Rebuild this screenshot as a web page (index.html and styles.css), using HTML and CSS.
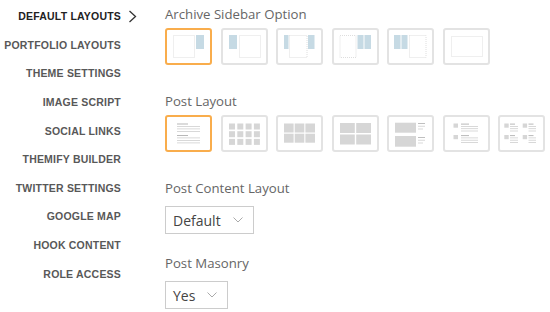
FILE: index.html
```html
<!DOCTYPE html>
<html lang="en">
<head>
  <meta charset="UTF-8" />
  <title>Theme Settings</title>
  <link rel="stylesheet" href="styles.css">
</head>
<body>

<div class="page">
  <ul class="menu">
    <li class="menu-item active">
      <span>DEFAULT LAYOUTS</span>
      <svg class="chevron" width="9" height="13" viewBox="0 0 9 13"><polyline points="1.5,1 7.5,6.5 1.5,12" /></svg>
    </li>
    <li class="menu-item"><span>PORTFOLIO LAYOUTS</span></li>
    <li class="menu-item"><span>THEME SETTINGS</span></li>
    <li class="menu-item"><span>IMAGE SCRIPT</span></li>
    <li class="menu-item"><span>SOCIAL LINKS</span></li>
    <li class="menu-item"><span>THEMIFY BUILDER</span></li>
    <li class="menu-item"><span>TWITTER SETTINGS</span></li>
    <li class="menu-item"><span>GOOGLE MAP</span></li>
    <li class="menu-item"><span>HOOK CONTENT</span></li>
    <li class="menu-item"><span>ROLE ACCESS</span></li>
  </ul>

  <div class="settings">
    <div class="section">
      <div class="label">Archive Sidebar Option</div>
      <div class="options">
        <div class="option selected">
          <svg viewBox="2 2 43 33"><rect class="dots" x="8.5" y="7.5" width="21" height="22" /><rect class="side" x="31" y="7" width="8" height="14" /></svg>
        </div>
        <div class="option">
          <svg viewBox="2 2 43 33"><rect class="side" x="8" y="7" width="8" height="14" /><rect class="dots" x="18.5" y="7.5" width="21" height="22" /></svg>
        </div>
        <div class="option">
          <svg viewBox="2 2 43 33"><rect class="side" x="8" y="7" width="4.5" height="14" /><rect class="dots" x="13.5" y="7.5" width="17.5" height="22" /><rect class="side" x="32" y="7" width="6.5" height="14" /></svg>
        </div>
        <div class="option">
          <svg viewBox="2 2 43 33"><rect class="dots" x="8" y="7.5" width="16" height="22" /><rect class="side" x="25.5" y="7" width="6" height="14" /><rect class="side" x="32.5" y="7" width="6.5" height="14" /></svg>
        </div>
        <div class="option">
          <svg viewBox="2 2 43 33"><rect class="side" x="7" y="7" width="6.5" height="14" /><rect class="side" x="14.5" y="7" width="6" height="14" /><rect class="dots" x="22.5" y="7.5" width="16.5" height="22" /></svg>
        </div>
        <div class="option">
          <svg viewBox="2 2 43 33"><rect class="dots" x="8.5" y="8.5" width="31" height="20" /></svg>
        </div>
      </div>
    </div>

    <div class="section">
      <div class="label">Post Layout</div>
      <div class="options">
        <div class="option selected">
          <svg viewBox="2 2 43 33">
            <rect class="title" x="12" y="8.5" width="11" height="1" />
            <rect class="line" x="12" y="11" width="23" height="0.8" />
            <rect class="line" x="12" y="13.5" width="23" height="0.8" />
            <rect class="line" x="12" y="16" width="23" height="0.8" />
            <rect class="title" x="12" y="20" width="11" height="1" />
            <rect class="line" x="12" y="22.5" width="23" height="0.8" />
            <rect class="line" x="12" y="25" width="23" height="0.8" />
            <rect class="line" x="12" y="27.5" width="23" height="0.8" />
          </svg>
        </div>
        <div class="option">
          <svg viewBox="2 2 43 33">
            <rect class="block" x="8" y="8.5" width="6" height="6" /><rect class="block" x="16.3" y="8.5" width="6" height="6" /><rect class="block" x="24.6" y="8.5" width="6" height="6" /><rect class="block" x="32.9" y="8.5" width="6" height="6" />
            <rect class="block" x="8" y="16.2" width="6" height="6" /><rect class="block" x="16.3" y="16.2" width="6" height="6" /><rect class="block" x="24.6" y="16.2" width="6" height="6" /><rect class="block" x="32.9" y="16.2" width="6" height="6" />
            <rect class="block" x="8" y="23.9" width="6" height="6" /><rect class="block" x="16.3" y="23.9" width="6" height="6" /><rect class="block" x="24.6" y="23.9" width="6" height="6" /><rect class="block" x="32.9" y="23.9" width="6" height="6" />
          </svg>
        </div>
        <div class="option">
          <svg viewBox="2 2 43 33">
            <rect class="block" x="8" y="8.5" width="9.6" height="9" /><rect class="block" x="18.7" y="8.5" width="9.6" height="9" /><rect class="block" x="29.4" y="8.5" width="9.6" height="9" />
            <rect class="block" x="8" y="18.7" width="9.6" height="9" /><rect class="block" x="18.7" y="18.7" width="9.6" height="9" /><rect class="block" x="29.4" y="18.7" width="9.6" height="9" />
          </svg>
        </div>
        <div class="option">
          <svg viewBox="2 2 43 33">
            <rect class="block" x="8" y="8" width="14.8" height="10" /><rect class="block" x="24.2" y="8" width="14.8" height="10" />
            <rect class="block" x="8" y="19.5" width="14.8" height="10" /><rect class="block" x="24.2" y="19.5" width="14.8" height="10" />
          </svg>
        </div>
        <div class="option">
          <svg viewBox="2 2 43 33">
            <rect class="block" x="8" y="7.7" width="21" height="10" /><rect class="block" x="8" y="21" width="21" height="10.7" />
            <rect class="title" x="31" y="8" width="7" height="0.9" /><rect class="line" x="31" y="10.8" width="7" height="0.8" /><rect class="line" x="31" y="13.6" width="5" height="0.8" />
            <rect class="title" x="31" y="22" width="7" height="0.9" /><rect class="line" x="31" y="24.8" width="7" height="0.8" /><rect class="line" x="31" y="27.6" width="5" height="0.8" />
          </svg>
        </div>
        <div class="option">
          <svg viewBox="2 2 43 33">
            <rect class="block" x="10.5" y="8.5" width="4.5" height="4.2" />
            <rect class="title" x="18" y="8.6" width="8" height="1" /><rect class="line" x="18" y="11" width="17" height="0.8" /><rect class="line" x="18" y="13.3" width="17" height="0.8" /><rect class="line" x="18" y="15.6" width="17" height="0.8" />
            <rect class="block" x="10.5" y="20" width="4.5" height="4.2" />
            <rect class="title" x="18" y="20.1" width="8" height="1" /><rect class="line" x="18" y="22.5" width="17" height="0.8" /><rect class="line" x="18" y="24.8" width="17" height="0.8" /><rect class="line" x="18" y="27.1" width="17" height="0.8" />
          </svg>
        </div>
        <div class="option">
          <svg viewBox="2 2 43 33">
            <rect class="block" x="6.3" y="8.5" width="4.4" height="4.2" />
            <rect class="title" x="12" y="8.6" width="5" height="1" /><rect class="line" x="12" y="11" width="8" height="0.8" /><rect class="line" x="12" y="13.3" width="8" height="0.8" /><rect class="line" x="12" y="15.6" width="8" height="0.8" />
            <rect class="block" x="24.7" y="8.5" width="4.4" height="4.2" />
            <rect class="title" x="30.5" y="8.6" width="5" height="1" /><rect class="line" x="30.5" y="11" width="7.5" height="0.8" /><rect class="line" x="30.5" y="13.3" width="7.5" height="0.8" /><rect class="line" x="30.5" y="15.6" width="7.5" height="0.8" />
            <rect class="block" x="6.3" y="20" width="4.4" height="4.2" />
            <rect class="title" x="12" y="20.1" width="5" height="1" /><rect class="line" x="12" y="22.5" width="8" height="0.8" /><rect class="line" x="12" y="24.8" width="8" height="0.8" /><rect class="line" x="12" y="27.1" width="8" height="0.8" />
            <rect class="block" x="24.7" y="20" width="4.4" height="4.2" />
            <rect class="title" x="30.5" y="20.1" width="5" height="1" /><rect class="line" x="30.5" y="22.5" width="7.5" height="0.8" /><rect class="line" x="30.5" y="24.8" width="7.5" height="0.8" /><rect class="line" x="30.5" y="27.1" width="7.5" height="0.8" />
          </svg>
        </div>
      </div>
    </div>

    <div class="section section-select">
      <div class="label">Post Content Layout</div>
      <div class="dropdown">
        <span>Default</span>
        <svg width="10" height="6" viewBox="0 0 10 6"><polyline points="0.5,0.5 5,5 9.5,0.5" /></svg>
      </div>
    </div>

    <div class="section section-select">
      <div class="label">Post Masonry</div>
      <div class="dropdown">
        <span>Yes</span>
        <svg width="10" height="6" viewBox="0 0 10 6"><polyline points="0.5,0.5 5,5 9.5,0.5" /></svg>
      </div>
    </div>
  </div>
</div>

</body>
</html>
```

FILE: styles.css
```css
html, body {
  margin: 0; padding: 0;
  background: #fff;
  font-family: 'Open Sans', sans-serif;
}

.page {
  display: flex;
  align-items: flex-start;
}

.menu {
  list-style: none;
  margin: 0;
  padding: 2px 0 0;
  width: 140px;
  flex-shrink: 0;
}

.menu-item {
  display: grid;
  grid-template-columns: 1fr 19px;
  align-items: center;
  height: 28.6px;
  font-family: 'Liberation Sans', sans-serif;
  font-weight: 700;
  font-size: 10.5px;
  letter-spacing: 0.2px;
  color: #585858;
  text-align: right;
}

.menu-item.active {
  color: #222;
}

.chevron {
  justify-self: end;
  margin-right: 3px;
}

.chevron polyline {
  fill: none;
  stroke: #333;
  stroke-width: 1.3;
}

.settings {
  margin-left: 25px;
  padding-top: 5px;
}

.label {
  font-size: 13.2px;
  line-height: 18px;
  color: #666;
  margin-bottom: 5px;
}

.section {
  margin-bottom: 27px;
}

.section-select {
  margin-bottom: 20px;
}

.section:last-child {
  margin-bottom: 0;
}

.section-select .label {
  margin-bottom: 9px;
}

.options {
  display: flex;
  gap: 8.5px;
}

.option {
  width: 47px;
  height: 37px;
  box-sizing: border-box;
  border: 2px solid #e3e3e3;
  border-radius: 3px;
  background: #fff;
}

.option.selected {
  border-color: #f9ad4c;
}

.option svg {
  display: block;
  width: 43px;
  height: 33px;
}

.dots {
  fill: none;
  stroke: #d6d6d6;
  stroke-width: 0.8;
  stroke-dasharray: 1 1;
}

.side {
  fill: #c6dae4;
}

.block {
  fill: #d6d6d6;
}

.line {
  fill: #cfcfcf;
}

.title {
  fill: #b8b8b8;
}

.dropdown {
  display: inline-flex;
  align-items: center;
  gap: 12px;
  height: 28px;
  box-sizing: border-box;
  padding: 0 10px 0 7px;
  border: 1px solid #ccc;
  font-size: 14px;
  color: #444;
}

.dropdown polyline {
  fill: none;
  stroke: #aaa;
  stroke-width: 1;
}
```
